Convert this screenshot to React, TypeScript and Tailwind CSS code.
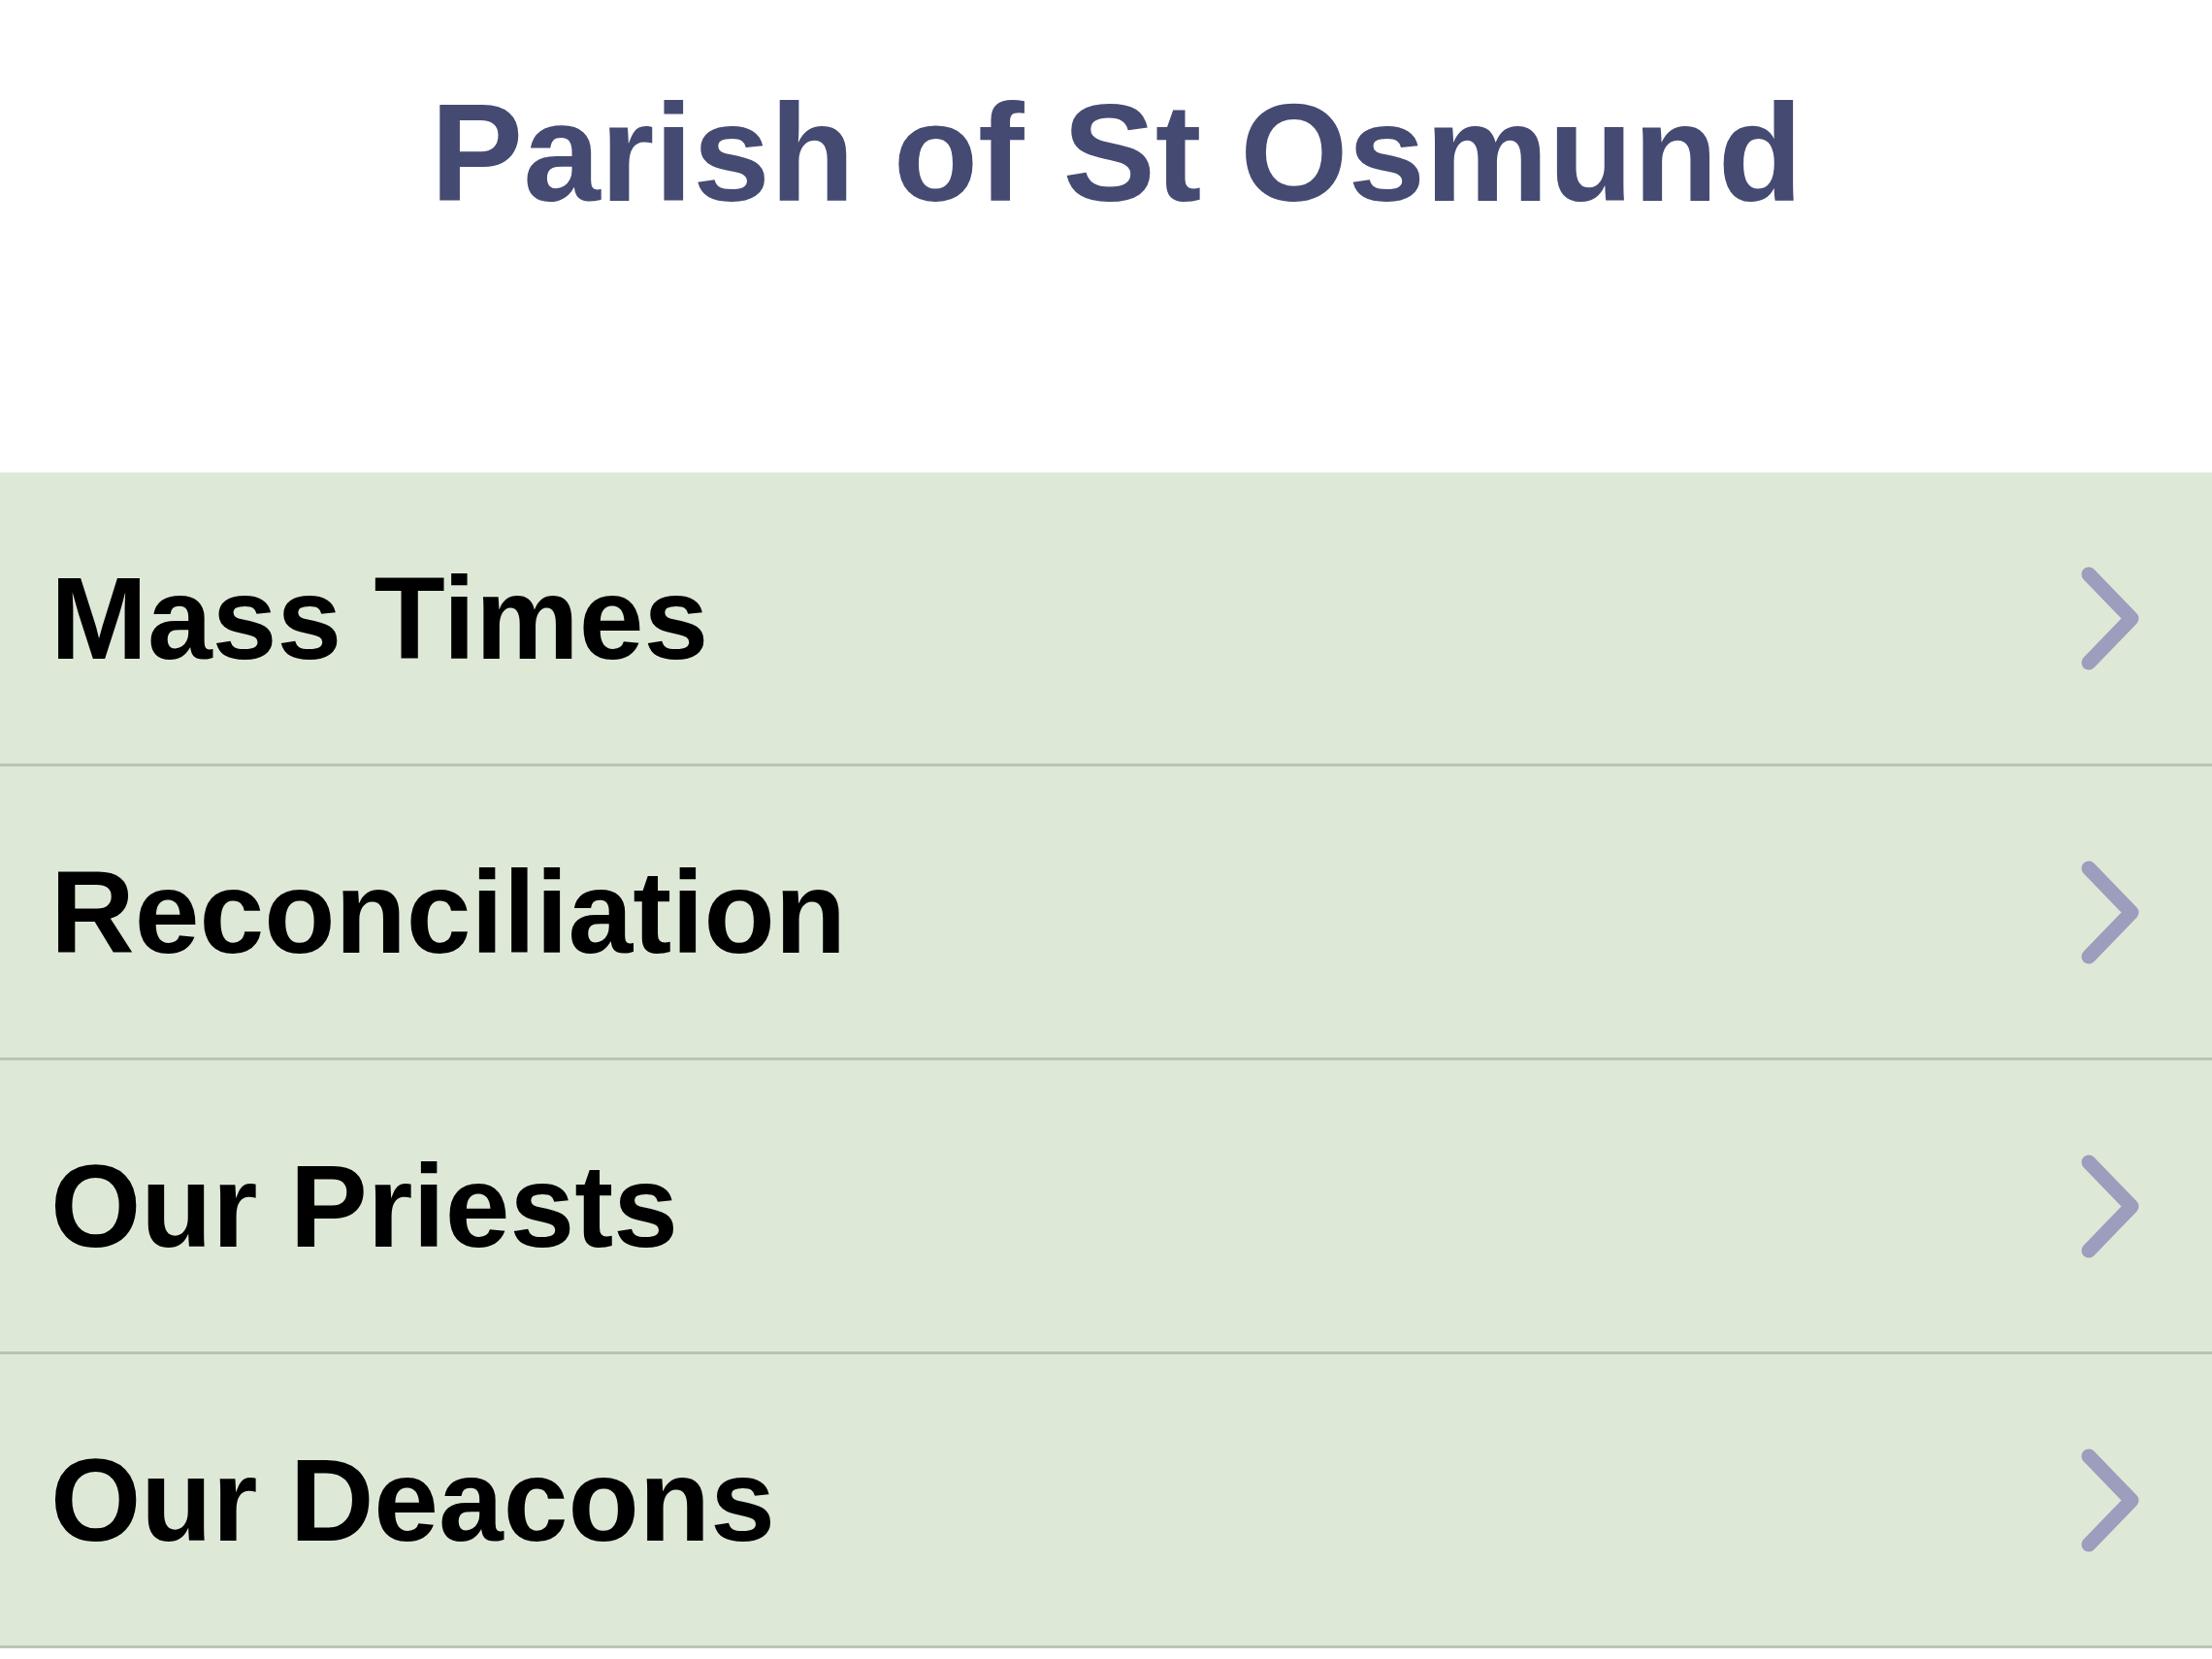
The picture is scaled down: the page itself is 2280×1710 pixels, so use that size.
const ITEMS = ["Mass Times", "Reconciliation", "Our Priests", "Our Deacons"];

function Chevron() {
  return (
    <svg width="64" height="111" viewBox="0 0 64 111" fill="none" className="shrink-0">
      <polyline
        points="10,10 54,55.5 10,101"
        stroke="#9d9dbd"
        strokeWidth="15"
        strokeLinecap="round"
        strokeLinejoin="round"
      />
    </svg>
  );
}

export default function App() {
  return (
    <div className="min-h-[1710px] w-full bg-white font-['Liberation_Sans',Arial,sans-serif]">
      {/* Title */}
      <header className="h-[487px] pt-[86px] pl-[22px] text-center">
        <h1 className="text-[143px] leading-none font-bold text-[#454a72]">
          Parish of St Osmund
        </h1>
      </header>

      {/* Menu */}
      <ul className="bg-[#dde9d6]">
        {ITEMS.map((item) => (
          <li
            key={item}
            className="flex h-[303px] items-center justify-between border-b-[3px] border-[#b7c6b1] pr-[73px] pl-[52px]"
          >
            <span className="text-[120px] leading-none font-bold text-black">{item}</span>
            <Chevron />
          </li>
        ))}
      </ul>
    </div>
  );
}
